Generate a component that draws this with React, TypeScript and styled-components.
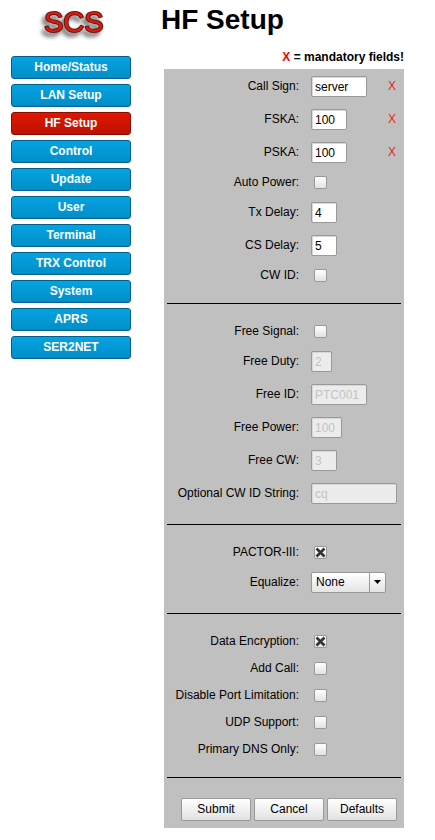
import React, { useState } from "react";
import styled, { createGlobalStyle, css } from "styled-components";

const GlobalStyle = createGlobalStyle`
  * { box-sizing: border-box; }
  body {
    margin: 0;
    background: #fff;
    color: #000;
    font-family: "Liberation Sans", Arial, sans-serif;
    font-size: 12px;
    line-height: 14px;
  }
  input, select, button { font: inherit; color: inherit; margin: 0; }
`;

const Page = styled.div`
  display: flex;
  gap: 30px;
  align-items: flex-start;
  padding: 0 31px 12px 11px;
`;

const Sidebar = styled.aside`
  flex: 0 0 120px;
  display: flex;
  flex-direction: column;
`;

const LogoLink = styled.a`
  display: flex;
  height: 56px;
  padding-left: 23px;
`;

const LogoText = styled.text`
  font-size: 29px;
  fill: #e3190d;
  stroke: #5c1511;
  stroke-width: 2px;
  stroke-linejoin: round;
  paint-order: stroke;
  filter: drop-shadow(-3px 4px 2px rgba(60, 60, 60, 0.75));
`;

const Nav = styled.nav`
  display: flex;
  flex-direction: column;
  gap: 5px;
`;

const NavLink = styled.a<{ $active?: boolean }>`
  display: flex;
  align-items: center;
  justify-content: center;
  height: 23px;
  padding-bottom: 2px;
  border: 1px solid #005f8b;
  border-radius: 3px;
  background: linear-gradient(#05a3e2, #008ec8);
  color: #fff;
  font-weight: bold;
  text-decoration: none;
  ${(p) =>
    p.$active &&
    css`
      border-color: #8a0d02;
      background: linear-gradient(#df1700, #be1100);
    `}
`;

const Main = styled.main`
  flex: 1;
  min-width: 0;
`;

const Title = styled.h1`
  height: 50px;
  margin: 0;
  padding-top: 4px;
  font-size: 28px;
  line-height: 32px;
`;

const Note = styled.p`
  height: 19px;
  margin: 0;
  font-weight: bold;
  text-align: right;
`;

const NoteMark = styled.span`
  color: #f00;
`;

const Panel = styled.form`
  margin-left: 3px;
  padding: 1px 0 7px;
  background: #c0c0c0;
`;

const Group = styled.div`
  display: flex;
  flex-direction: column;
`;

const Divider = styled.hr`
  height: 1px;
  margin: 14px 3px;
  border: 0;
  background: #000;
`;

const Row = styled.div<{ $short?: boolean }>`
  display: grid;
  grid-template-columns: minmax(0, 9fr) minmax(0, 7fr);
  align-items: center;
  height: ${(p) => (p.$short ? 27 : 33)}px;
`;

const Label = styled.label`
  padding-bottom: 1px;
  text-align: right;
  white-space: nowrap;
`;

const Control = styled.div`
  display: flex;
  align-items: center;
  justify-content: space-between;
  padding: 0 7px 0 12px;
`;

const Mark = styled.span`
  padding: 0 1px 1px 0;
  color: #f02020;
`;

const TextInput = styled.input<{ $width: number }>`
  width: ${(p) => p.$width}px;
  height: 21px;
  padding: 1px 3px 0;
  border: 1px solid #999;
  border-radius: 2px;
  background: #fff;
  box-shadow: inset 1px 1px 0 #d8d8d8;
  outline: none;
  &:disabled {
    border-color: #999;
    background: #ececec;
    color: #c3c3c3;
  }
`;

const CheckBox = styled.input`
  appearance: none;
  width: 13px;
  height: 13px;
  border: 1px solid #999;
  border-radius: 2px;
  background: linear-gradient(#fff, #e2e2e2);
`;

const CheckWrap = styled.span`
  display: grid;
  margin-left: 3px;
  > * { grid-area: 1 / 1; }
`;

const Cross = styled.svg`
  width: 13px;
  height: 13px;
  z-index: 1;
  pointer-events: none;
`;

const SelectWrap = styled.span`
  display: grid;
  grid-template-columns: 1fr 17px;
  width: 75px;
  height: 21px;
`;

const Select = styled.select`
  appearance: none;
  grid-area: 1 / 1 / 2 / 3;
  padding: 0 18px 1px 4px;
  border: 1px solid #999;
  border-radius: 2px;
  background: linear-gradient(#fff, #e4e4e4);
  outline: none;
`;

const Arrow = styled.svg`
  grid-area: 1 / 2;
  width: 17px;
  height: 21px;
  z-index: 1;
  pointer-events: none;
`;

const Actions = styled.div`
  display: flex;
  justify-content: flex-end;
  gap: 3px;
  padding: 6px 7px 0 0;
`;

const Button = styled.button`
  width: 70px;
  height: 23px;
  padding: 0 0 1px;
  border: 1px solid #999;
  border-radius: 2px;
  background: linear-gradient(#fff, #e2e2e2);
`;

function Logo() {
  return (
    <svg width="84" height="46" viewBox="0 0 84 46">
      <LogoText x="10" y="32">SCS</LogoText>
    </svg>
  );
}

type FieldProps = {
  id: string;
  label: string;
  value: string;
  width: number;
  mandatory?: boolean;
  disabled?: boolean;
};

function Field({ id, label, value, width, mandatory, disabled }: FieldProps) {
  return (
    <Row>
      <Label htmlFor={id}>{label}</Label>
      <Control>
        <TextInput id={id} type="text" defaultValue={value} $width={width} disabled={disabled} required={mandatory} />
        {mandatory && <Mark>X</Mark>}
      </Control>
    </Row>
  );
}

function Check({ id, label, on = false }: { id: string; label: string; on?: boolean }) {
  const [checked, setChecked] = useState(on);
  return (
    <Row $short>
      <Label htmlFor={id}>{label}</Label>
      <Control>
        <CheckWrap>
          <CheckBox id={id} type="checkbox" checked={checked} onChange={(e) => setChecked(e.target.checked)} />
          {checked && (
            <Cross viewBox="0 0 13 13" aria-hidden="true">
              <path d="M2.5 2.5 L10.5 10.5 M10.5 2.5 L2.5 10.5" stroke="#333" strokeWidth="2.6" />
            </Cross>
          )}
        </CheckWrap>
      </Control>
    </Row>
  );
}

const pages = ["Home/Status", "LAN Setup", "HF Setup", "Control", "Update", "User", "Terminal", "TRX Control", "System", "APRS", "SER2NET"];

export default function App() {
  return (
    <>
      <GlobalStyle />
      <Page>
        <Sidebar>
          <LogoLink href="#home"><Logo /></LogoLink>
          <Nav>
            {pages.map((name) => (
              <NavLink key={name} href="#" $active={name === "HF Setup"}>{name}</NavLink>
            ))}
          </Nav>
        </Sidebar>
        <Main>
          <Title>HF Setup</Title>
          <Note><NoteMark>X</NoteMark> = mandatory fields!</Note>
          <Panel onSubmit={(e) => e.preventDefault()}>
            <Group>
              <Field id="call" label="Call Sign:" value="server" width={56} mandatory />
              <Field id="fska" label="FSKA:" value="100" width={36} mandatory />
              <Field id="pska" label="PSKA:" value="100" width={36} mandatory />
              <Check id="autopower" label="Auto Power:" />
              <Field id="txdelay" label="Tx Delay:" value="4" width={26} />
              <Field id="csdelay" label="CS Delay:" value="5" width={26} />
              <Check id="cwid" label="CW ID:" />
            </Group>
            <Divider />
            <Group>
              <Check id="freesignal" label="Free Signal:" />
              <Field id="freeduty" label="Free Duty:" value="2" width={21} disabled />
              <Field id="freeid" label="Free ID:" value="PTC001" width={56} disabled />
              <Field id="freepower" label="Free Power:" value="100" width={31} disabled />
              <Field id="freecw" label="Free CW:" value="3" width={26} disabled />
              <Field id="cwstring" label="Optional CW ID String:" value="cq" width={86} disabled />
            </Group>
            <Divider />
            <Group>
              <Check id="pactor" label="PACTOR-III:" on />
              <Row>
                <Label htmlFor="equalize">Equalize:</Label>
                <Control>
                  <SelectWrap>
                    <Select id="equalize" defaultValue="None">
                      <option>None</option>
                    </Select>
                    <Arrow viewBox="0 0 17 21" aria-hidden="true">
                      <path d="M0.5 1 V20" stroke="#999" />
                      <path d="M5 8 H12 L8.5 12 Z" fill="#000" />
                    </Arrow>
                  </SelectWrap>
                </Control>
              </Row>
            </Group>
            <Divider />
            <Group>
              <Check id="encryption" label="Data Encryption:" on />
              <Check id="addcall" label="Add Call:" />
              <Check id="portlimit" label="Disable Port Limitation:" />
              <Check id="udp" label="UDP Support:" />
              <Check id="dns" label="Primary DNS Only:" />
            </Group>
            <Divider />
            <Actions>
              <Button type="submit">Submit</Button>
              <Button type="button">Cancel</Button>
              <Button type="reset">Defaults</Button>
            </Actions>
          </Panel>
        </Main>
      </Page>
    </>
  );
}
